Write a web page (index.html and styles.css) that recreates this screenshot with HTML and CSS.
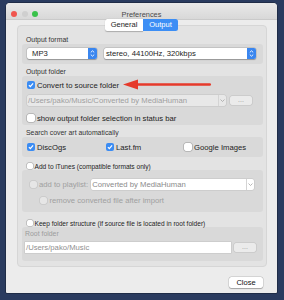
FILE: index.html
```html
<!DOCTYPE html>
<html lang="en">
<head>
  <meta charset="UTF-8">
  <title>Preferences</title>
  <link rel="stylesheet" href="styles.css">
</head>
<body>
  <div class="window">
    <div class="titlebar">
      <div class="lights">
        <span class="light red"></span>
        <span class="light idle"></span>
        <span class="light green"></span>
      </div>
      <div class="title">Preferences</div>
      <div></div>
    </div>

    <div class="tabs">
      <span class="tab general">General</span>
      <span class="tab output active">Output</span>
    </div>

    <div class="panel">
      <div class="label">Output format</div>
      <div class="group format">
        <div class="popup popup-codec">
          <span>MP3</span>
          <span class="stepper"><svg width="9" height="11" viewBox="0 0 9 11"><path d="M2.8 4.4 L4.5 2.8 L6.2 4.4 M2.8 6.6 L4.5 8.2 L6.2 6.6" fill="none" stroke="#fff" stroke-width="0.9"/></svg></span>
        </div>
        <div class="popup popup-quality">
          <span>stereo, 44100Hz, 320kbps</span>
          <span class="stepper"><svg width="9" height="11" viewBox="0 0 9 11"><path d="M2.8 4.4 L4.5 2.8 L6.2 4.4 M2.8 6.6 L4.5 8.2 L6.2 6.6" fill="none" stroke="#fff" stroke-width="0.9"/></svg></span>
        </div>
      </div>

      <div class="label">Output folder</div>
      <div class="group folder">
        <div class="check-row">
          <span class="cb on"><svg width="8" height="8" viewBox="0 0 8 8"><path d="M1.9 4.2 L3.3 5.6 L6.1 2.3" fill="none" stroke="#fff" stroke-width="1.2"/></svg></span>
          <span>Convert to source folder</span>
        </div>
        <div class="path-row">
          <div class="combo">
            <span class="combo-text">/Users/pako/Music/Converted by MediaHuman</span>
            <span class="combo-arrow"><svg width="5" height="3" viewBox="0 0 5 3"><path d="M0.5 0.5 L2.5 2.5 L4.5 0.5" fill="none" stroke="#a5a5a5" stroke-width="0.8"/></svg></span>
          </div>
          <span class="dots disabled">...</span>
        </div>
        <div class="check-row spaced">
          <span class="cb"></span>
          <span>show output folder selection in status bar</span>
        </div>
        <svg class="arrow" width="90" height="11" viewBox="0 0 90 11">
          <polygon points="0,5.5 15,0.5 15,10.5" fill="#e63a2b"/>
          <rect x="13" y="4.2" width="75" height="2.6" rx="1.2" fill="#e63a2b"/>
        </svg>
      </div>

      <div class="label">Search cover art automatically</div>
      <div class="group covers">
        <div class="check-row">
          <span class="cb on"><svg width="8" height="8" viewBox="0 0 8 8"><path d="M1.9 4.2 L3.3 5.6 L6.1 2.3" fill="none" stroke="#fff" stroke-width="1.2"/></svg></span>
          <span>DiscOgs</span>
        </div>
        <div class="check-row">
          <span class="cb on"><svg width="8" height="8" viewBox="0 0 8 8"><path d="M1.9 4.2 L3.3 5.6 L6.1 2.3" fill="none" stroke="#fff" stroke-width="1.2"/></svg></span>
          <span>Last.fm</span>
        </div>
        <div class="check-row">
          <span class="cb"></span>
          <span>Google Images</span>
        </div>
      </div>

      <div class="small-row itunes">
        <span class="cb small"></span>
        <span>Add to iTunes (compatible formats only)</span>
      </div>
      <div class="group playlist">
        <div class="playlist-row">
          <span class="cb off"></span>
          <span class="muted">add to playlist:</span>
          <div class="combo light">
            <span class="combo-text">Converted by MediaHuman</span>
            <span class="combo-arrow"><svg width="5" height="3" viewBox="0 0 5 3"><path d="M0.5 0.5 L2.5 2.5 L4.5 0.5" fill="none" stroke="#a5a5a5" stroke-width="0.8"/></svg></span>
          </div>
        </div>
        <div class="check-row remove">
          <span class="cb off"></span>
          <span class="muted">remove converted file after import</span>
        </div>
      </div>

      <div class="small-row keep">
        <span class="cb small"></span>
        <span>Keep folder structure (if source file is located in root folder)</span>
      </div>
      <div class="group root">
        <div class="root-label">Root folder</div>
        <div class="path-row root-row">
          <div class="field">/Users/pako/Music</div>
          <span class="dots">...</span>
        </div>
      </div>
    </div>

    <div class="footer">
      <button class="close">Close</button>
    </div>
  </div>
</body>
</html>
```

FILE: styles.css
```css
* {
  box-sizing: border-box;
}
body {
  margin: 0;
  height: 300px;
  padding: 3px 0 0 6px;
  background: #2a3b5f;
  font-family: "Liberation Sans", Arial, sans-serif;
  color: #1d1d1d;
  overflow: hidden;
}
.window {
  width: 271px;
  height: 290px;
  background: #ececec;
  border-radius: 4px 4px 1px 1px;
  display: flex;
  flex-direction: column;
  box-shadow: 0 0 0 0.5px rgba(0, 0, 0, 0.5);
}
.titlebar {
  height: 22px;
  display: grid;
  grid-template-columns: 40px 1fr 40px;
  align-items: center;
  border-radius: 4px 4px 0 0;
  background: linear-gradient(#e9e9e9, #d8d8d8 16px, #cacaca 16px, #cacaca 17px, #ececec 17px);
}
.lights {
  display: flex;
  gap: 4.5px;
  padding-left: 5px;
}
.light {
  width: 6px;
  height: 6px;
  border-radius: 50%;
}
.red { background: #f0554e; }
.idle { background: #cfcfcf; }
.green { background: #39c24a; }
.title {
  text-align: center;
  font-size: 7.4px;
  color: #4a4a4a;
}
.tabs {
  display: flex;
  justify-content: center;
  margin-top: -6px;
  position: relative;
  z-index: 1;
  font-size: 7.5px;
  line-height: 12px;
}
.tab {
  height: 12px;
  text-align: center;
}
.general {
  width: 38px;
  background: #fff;
  border-radius: 2.5px 0 0 2.5px;
  box-shadow: 0 0.5px 1px rgba(0, 0, 0, 0.25);
}
.output {
  width: 35px;
  background: #3c8ef5;
  color: #fff;
  border-radius: 0 2.5px 2.5px 0;
}
.panel {
  margin: -6px 10px 0 11px;
  background: #e3e3e3;
  border: 1px solid #d6d6d6;
  border-radius: 4px;
  padding: 10px 3px 5px 4px;
}
.label {
  height: 8px;
  line-height: 8px;
  margin-top: 4px;
  padding-left: 4px;
  font-size: 6.9px;
  color: #333;
}
.panel > .label:first-child {
  margin-top: 0;
}
.group {
  background: #d9d9d9;
  border-radius: 3px;
}
.format {
  display: flex;
  gap: 7px;
  padding: 4px 7px 5px 5px;
}
.popup {
  height: 11px;
  display: flex;
  align-items: center;
  justify-content: space-between;
  background: #fff;
  border-radius: 2px;
  box-shadow: 0 0 0 0.5px rgba(0, 0, 0, 0.15), 0 0.5px 1px rgba(0, 0, 0, 0.25);
  font-size: 7.7px;
}
.popup-codec {
  width: 70px;
  padding-left: 5px;
}
.popup-quality {
  width: 152px;
  padding-left: 2px;
}
.stepper {
  width: 9px;
  height: 11px;
  background: #3a86ef;
  border-radius: 0 2px 2px 0;
  display: flex;
}
.folder {
  position: relative;
  padding: 4px 5px 2px;
}
.check-row {
  height: 10px;
  display: flex;
  align-items: center;
  gap: 2px;
  font-size: 7.7px;
}
.check-row.spaced {
  margin-top: 7px;
}
.cb {
  width: 8px;
  height: 8px;
  flex: none;
  display: flex;
  border-radius: 2px;
  background: #fff;
  box-shadow: 0 0 0 0.5px rgba(0, 0, 0, 0.3);
}
.cb.on {
  background: #3b8cf3;
  box-shadow: none;
}
.cb.small {
  width: 6px;
  height: 6px;
  border-radius: 1.5px;
}
.cb.off {
  width: 7px;
  height: 7px;
  background: #e6e6e6;
  box-shadow: 0 0 0 0.5px rgba(0, 0, 0, 0.12);
}
.path-row {
  display: flex;
  align-items: center;
  gap: 4px;
  margin-top: 5px;
}
.combo {
  width: 199px;
  height: 11px;
  display: flex;
  align-items: center;
  background: #e8e8e8;
  border-radius: 2px;
  box-shadow: 0 0 0 0.5px rgba(0, 0, 0, 0.1);
  font-size: 7.7px;
  color: #9e9e9e;
}
.combo-text {
  flex: 1;
  padding-left: 1px;
  white-space: nowrap;
  overflow: hidden;
}
.combo-arrow {
  width: 8px;
  height: 11px;
  display: flex;
  align-items: center;
  justify-content: center;
  border-left: 0.5px solid #d4d4d4;
}
.dots {
  width: 22px;
  height: 9px;
  line-height: 7px;
  text-align: center;
  background: #ebebeb;
  border-radius: 2px;
  box-shadow: 0 0 0 0.5px rgba(0, 0, 0, 0.12);
  font-size: 7px;
  color: #999;
}
.arrow {
  position: absolute;
  left: 101px;
  top: 3px;
}
.covers {
  display: grid;
  grid-template-columns: 79px 78px 1fr;
  padding: 5px;
}
.small-row {
  height: 8px;
  display: flex;
  align-items: center;
  gap: 1.5px;
  padding-left: 5px;
  font-size: 6.6px;
}
.itunes {
  margin-top: 5px;
}
.playlist {
  padding: 9px 9px 7px 8px;
}
.playlist-row {
  height: 11px;
  display: flex;
  align-items: center;
  gap: 2px;
  font-size: 7.7px;
}
.combo.light {
  flex: 1;
  width: auto;
  margin-left: 1px;
  background: #fff;
  color: #8a8a8a;
}
.muted {
  color: #a0a0a0;
}
.remove {
  margin-top: 5px;
  padding-left: 10px;
  gap: 2.5px;
}
.keep {
  margin-top: 7px;
}
.root {
  padding: 3px 7px 8px 3px;
}
.root-label {
  height: 8px;
  line-height: 8px;
  font-size: 6.9px;
  color: #9c9c9c;
}
.root-row {
  margin-top: 4px;
  gap: 3px;
}
.field {
  flex: 1;
  height: 11px;
  line-height: 11px;
  padding-left: 1px;
  background: #fff;
  font-size: 7.7px;
  color: #8f8f8f;
  box-shadow: 0 0 0 0.5px rgba(0, 0, 0, 0.1);
}
.footer {
  display: flex;
  justify-content: flex-end;
  padding: 10px 14px 0 0;
}
.close {
  width: 34px;
  height: 11px;
  padding: 0;
  border: none;
  background: #fff;
  border-radius: 2.5px;
  box-shadow: 0 0 0 0.5px rgba(0, 0, 0, 0.15), 0 0.5px 1px rgba(0, 0, 0, 0.25);
  font-family: "Liberation Sans", Arial, sans-serif;
  font-size: 7.5px;
  color: #111;
}
```
